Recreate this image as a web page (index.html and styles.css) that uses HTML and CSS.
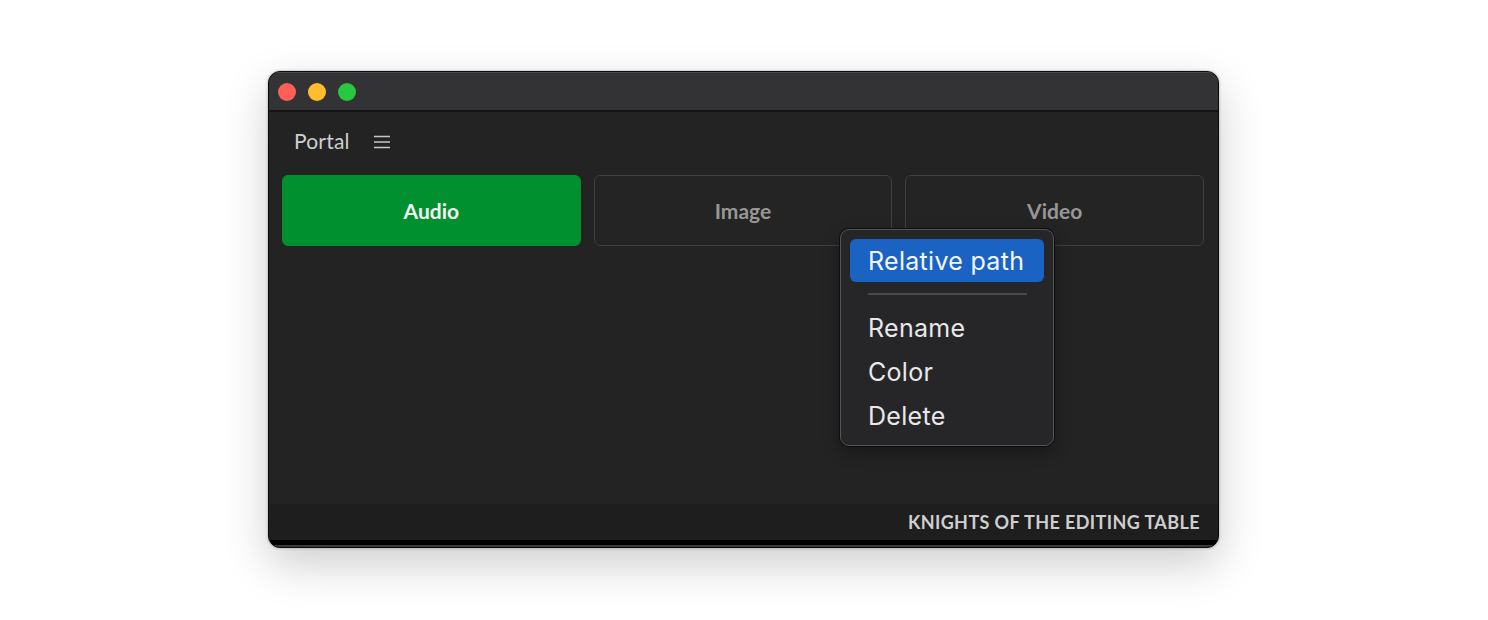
FILE: index.html
```html
<!DOCTYPE html>
<html>
<head>
<meta charset="utf-8">
<link rel="stylesheet" href="styles.css">
</head>
<body>
<div class="stage">
  <div class="window">
    <div class="titlebar">
      <span class="dot red"></span>
      <span class="dot yellow"></span>
      <span class="dot green"></span>
    </div>
    <div class="content">
      <div class="header">
        <span class="title">Portal</span>
        <svg class="burger" width="16" height="14" viewBox="0 0 16 14">
          <path d="M0 1.5H16M0 7H16M0 12.5H16" stroke="#c8c8c8" stroke-width="1.4" fill="none"/>
        </svg>
      </div>
      <div class="tabs">
        <div class="tab active">Audio</div>
        <div class="tab">Image</div>
        <div class="tab">Video</div>
      </div>
      <div class="menu">
        <div class="item selected">Relative path</div>
        <div class="sep"></div>
        <div class="item">Rename</div>
        <div class="item">Color</div>
        <div class="item">Delete</div>
      </div>
    </div>
    <div class="footer">KNIGHTS OF THE EDITING TABLE</div>
    <div class="bottom-strip"></div>
  </div>
</div>
</body>
</html>
```
FILE: styles.css
```css
html, body {
  margin: 0;
  padding: 0;
  background: #ffffff;
}
.stage {
  padding: 71px 0 80px 268px;
}
.window {
  width: 949px;
  height: 475px;
  border: 1px solid #0a0a0a;
  border-radius: 12px;
  background: #232323;
  overflow: hidden;
  display: flex;
  flex-direction: column;
  box-shadow: 0 16px 45px rgba(0,0,0,0.2), 0 0 3px rgba(0,0,0,0.3);
  font-family: "Lato", "Open Sans", sans-serif;
  position: relative;
}
.titlebar {
  height: 38px;
  background: #333335;
  border-bottom: 2px solid #141414;
  box-shadow: inset 0 1px 0 rgba(255,255,255,0.12);
  display: flex;
  align-items: center;
  padding-left: 9px;
  padding-top: 2px;
  box-sizing: border-box;
  height: 40px;
  gap: 12px;
  flex-shrink: 0;
}
.dot {
  width: 18px;
  height: 18px;
  border-radius: 50%;
  display: block;
}
.red { background: #fe5f57; }
.yellow { background: #febc2e; }
.green { background: #28c840; }
.content {
  flex: 1;
  position: relative;
  padding: 0 14px 0 13px;
}
.header {
  height: 57px;
  padding-bottom: 6px;
  display: flex;
  align-items: center;
  padding-left: 12px;
  gap: 24px;
}
.title {
  color: #cfcfcf;
  font-size: 21px;
  letter-spacing: 0.2px;
}
.burger {
  margin-top: 2px;
}
.tabs {
  display: flex;
  gap: 13px;
}
.tab {
  flex: 1;
  height: 69px;
  border: 1px solid #404040;
  border-radius: 6px;
  background: #242424;
  display: flex;
  align-items: center;
  justify-content: center;
  color: #979797;
  font-size: 21px;
  font-weight: 700;
}
.tab.active {
  background: #01902f;
  border-color: #01902f;
  color: #f4f4f4;
}
.menu {
  position: absolute;
  left: 571px;
  top: 117px;
  width: 214px;
  box-sizing: border-box;
  background: #262628;
  border: 1px solid #555557;
  border-radius: 9px;
  box-shadow: 0 0 0 1px #0e0e0e, 0 6px 16px rgba(0,0,0,0.35);
  padding: 9px 9px 7px;
  font-family: "Inter", "Noto Sans", sans-serif;
}
.item {
  height: 44px;
  display: flex;
  align-items: center;
  padding-left: 18px;
  color: #e8e8e8;
  font-size: 25px;
  letter-spacing: 0.3px;
  border-radius: 6px;
}
.item.selected {
  background: #1a63c3;
  color: #f2f6fc;
  height: 43px;
}
.sep {
  height: 2px;
  background: #4a4a4c;
  margin: 11px 17px 11px 18px;
}
.footer {
  height: 36px;
  background: #1e1e1e;
  color: #cfcfcf;
  font-size: 18px;
  font-weight: 700;
  display: flex;
  align-items: center;
  justify-content: flex-end;
  padding-right: 18px;
  letter-spacing: 0.4px;
  flex-shrink: 0;
}
.bottom-strip {
  height: 5px;
  background: #020202;
  border-bottom: 2px solid #3a3a3a;
  flex-shrink: 0;
}
```
